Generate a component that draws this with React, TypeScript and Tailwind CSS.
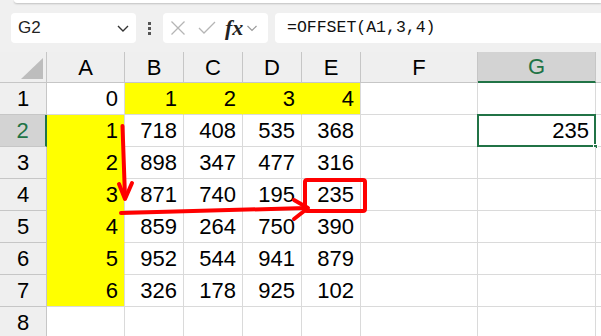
import React from "react";

const cols = ["A", "B", "C", "D", "E", "F", "G"];

const data: (number | null)[][] = [
  [0, 1, 2, 3, 4, null, null],
  [1, 718, 408, 535, 368, null, 235],
  [2, 898, 347, 477, 316, null, null],
  [3, 871, 740, 195, 235, null, null],
  [4, 859, 264, 750, 390, null, null],
  [5, 952, 544, 941, 879, null, null],
  [6, 326, 178, 925, 102, null, null],
  [null, null, null, null, null, null, null],
];

function isYellow(r: number, c: number) {
  if (r === 0) return c >= 1 && c <= 4;
  return c === 0 && r <= 6;
}

export default function App() {
  return (
    <div className="relative w-[601px] h-[336px] overflow-hidden bg-white" style={{ fontFamily: '"Liberation Sans", Arial, sans-serif' }}>
      {/* formula bar */}
      <div className="h-[52px] bg-[#f0f0f0] relative">
        <div className="absolute left-[14px] right-0 top-0 h-[3px] bg-white rounded-bl-[3px] shadow-[0_1px_2px_rgba(0,0,0,0.2)]" />
        <div className="flex items-center pt-[13px] pl-[11px]">
          <div className="w-[125px] h-[30px] bg-white rounded-[4px] flex items-center justify-between pl-[7px] pr-[6px]">
            <span className="text-[17px] text-[#222]">G2</span>
            <svg width="14" height="10" viewBox="0 0 14 10"><path d="M2 3 L7 8 L12 3" fill="none" stroke="#333" strokeWidth="1.4" /></svg>
          </div>
          <div className="w-[27px] flex flex-col items-center gap-[2px]">
            <div className="w-[3px] h-[3px] bg-[#555]" />
            <div className="w-[3px] h-[3px] bg-[#555]" />
            <div className="w-[3px] h-[3px] bg-[#555]" />
          </div>
          <div className="w-[105px] h-[30px] bg-white rounded-[4px] flex items-center pl-[7px]">
            <svg width="16" height="16" viewBox="0 0 16 16"><path d="M1.5 1.5 L14.5 14.5 M14.5 1.5 L1.5 14.5" stroke="#b5b5b5" strokeWidth="1.3" /></svg>
            <svg className="ml-[12px]" width="18" height="14" viewBox="0 0 18 14"><path d="M1 7 L6 12 L17 1" fill="none" stroke="#b5b5b5" strokeWidth="1.3" /></svg>
            <span className="ml-[9px] text-[22px] italic font-semibold text-[#222] leading-none" style={{ fontFamily: '"Liberation Serif", serif' }}>fx</span>
            <svg className="ml-[3px]" width="12" height="8" viewBox="0 0 12 8"><path d="M1.5 2 L6 6.5 L10.5 2" fill="none" stroke="#999" strokeWidth="1.2" /></svg>
          </div>
          <div className="ml-[7px] flex-1 h-[30px] bg-white rounded-l-[4px] flex items-center pl-[12px]">
            <span className="text-[16.5px] text-[#111]" style={{ fontFamily: '"Liberation Mono", monospace' }}>=OFFSET(A1,3,4)</span>
          </div>
        </div>
      </div>

      {/* grid */}
      <div className="grid grid-cols-[47px_78px_59px_59px_59px_59px_117px_118px_1fr] grid-rows-[31px_repeat(8,32px)] text-[22px] text-black">
        {/* header row */}
        <div className="bg-[#efefef] border-r border-b border-[#c6c6c6] relative">
          <svg className="absolute left-0 top-0" width="47" height="31" viewBox="0 0 47 31">
            <path d="M21 27 L43 6 L43 27 Z" fill="#bdbdbd" />
          </svg>
        </div>
        {cols.map((c) => (
          <div
            key={c}
            className={
              c === "G"
                ? "bg-[#d3d3d3] border-r border-[#c6c6c6] border-b-2 border-b-[#217346] text-[#217346] flex items-center justify-center"
                : "bg-[#efefef] border-r border-b border-[#c6c6c6] flex items-center justify-center"
            }
          >
            {c}
          </div>
        ))}
        <div className="bg-[#efefef] border-b border-[#c6c6c6]" />

        {data.map((row, r) => (
          <React.Fragment key={r}>
            <div
              className={
                r === 1
                  ? "bg-[#d3d3d3] border-b border-[#c6c6c6] border-r-2 border-r-[#217346] text-[#217346] flex items-center justify-center"
                  : "bg-[#efefef] border-r border-b border-[#c6c6c6] flex items-center justify-center"
              }
            >
              {r + 1}
            </div>
            {row.map((v, c) => {
              const yellow = isYellow(r, c);
              const nextYellow = isYellow(r, c + 1);
              const belowYellow = isYellow(r + 1, c);
              return (
                <div
                  key={c}
                  className={
                    "relative flex items-center justify-end pr-[6px] border-r border-b " +
                    (yellow ? "bg-[#ffff00] " : "bg-white ") +
                    (yellow && nextYellow ? "border-r-[#ffff00] " : "border-r-[#dadada] ") +
                    (yellow && belowYellow ? "border-b-[#ffff00]" : "border-b-[#dadada]")
                  }
                >
                  {v}
                  {r === 1 && c === 6 && (
                    <>
                      <div className="absolute -left-px -top-px right-[-1px] bottom-[-1px] border-2 border-[#217346]" />
                      <div className="absolute right-[-3px] bottom-[-3px] w-[5px] h-[5px] bg-[#217346] border border-white" />
                    </>
                  )}
                </div>
              );
            })}
            <div className="border-b border-[#dadada]" />
          </React.Fragment>
        ))}
      </div>

      {/* annotation overlay */}
      <svg className="absolute left-0 top-0 pointer-events-none" width="601" height="336" viewBox="0 0 601 336">
        <g fill="none" stroke="#ff0000" strokeWidth="4" strokeLinecap="round" strokeLinejoin="round">
          <path d="M122.5 126 L125 197" />
          <path d="M119 184 L125 199 L132 183" />
          <path d="M121 213 L306 208" />
          <path d="M294 200 L308 208 L294 219" />
          <rect x="305" y="180" width="60" height="31" rx="2" />
        </g>
      </svg>
    </div>
  );
}
